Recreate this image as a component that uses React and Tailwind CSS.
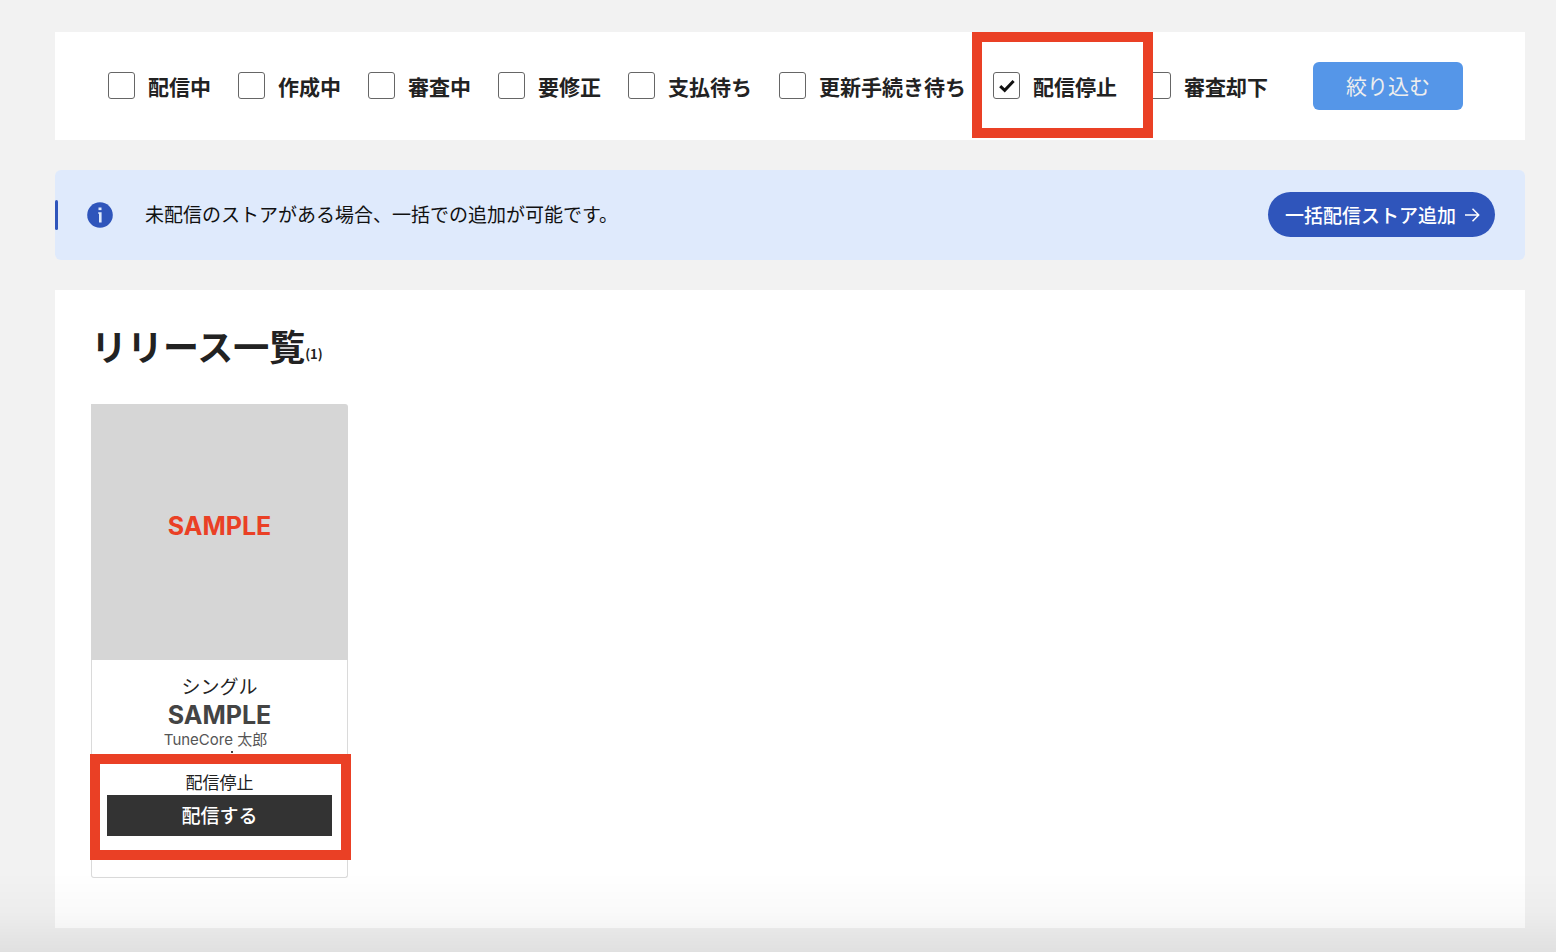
import React from 'react';

const filters = [
    { id: 'live', label: '配信中' },
    { id: 'draft', label: '作成中' },
    { id: 'review', label: '審査中' },
    { id: 'fix', label: '要修正' },
    { id: 'payment', label: '支払待ち' },
    { id: 'renewal', label: '更新手続き待ち' },
    { id: 'stopped', label: '配信停止', checked: true, highlighted: true },
    { id: 'rejected', label: '審査却下' },
];

const releases = [
    { id: 1, type: 'シングル', title: 'SAMPLE', artist: 'TuneCore 太郎', status: '配信停止' },
];

function FilterCheckbox({ id, label, checked, highlighted }) {
    return (
        <div className={`relative mb-px flex shrink-0 items-center gap-[13px] ${highlighted ? 'z-10' : ''}`}>
            {highlighted && (
                <span className="pointer-events-none absolute -top-10 -right-9 -bottom-[39px] -left-[21px] border-10 border-[#ea4025]" />
            )}
            <span className="grid size-[27px] place-items-center">
                <input
                    id={id}
                    type="checkbox"
                    defaultChecked={checked}
                    className="peer col-start-1 row-start-1 size-[27px] appearance-none rounded-[3px] border border-[#666] bg-white"
                />
                <svg viewBox="0 0 16 14" className="pointer-events-none invisible relative col-start-1 row-start-1 h-3.5 w-4 peer-checked:visible" fill="none" stroke="#111" strokeWidth="3">
                    <path d="M1.2 7.2 5.7 11.4 14.6 2" />
                </svg>
            </span>
            <label htmlFor={id} className="pt-0.5 text-[21px] leading-[25px] font-bold whitespace-nowrap">
                {label}
            </label>
        </div>
    );
}

function StoreNotice() {
    return (
        <section className="flex h-[90px] items-center rounded-md bg-[#dfeafc] pr-[30px]">
            <span className="h-[30px] w-[3px] rounded-xs bg-[#2f55bb]" />
            <svg viewBox="0 0 26 26" className="ml-[29px] size-[26px] shrink-0">
                <circle cx="13" cy="13" r="12.8" fill="#2f55bb" />
                <rect x="11.5" y="5.5" width="3" height="2.6" fill="#dfeafc" />
                <path d="M11.2 10.2h3.4v10.3h-2.6v-8.8h-.8z" fill="#dfeafc" />
            </svg>
            <p className="ml-8 flex-1 pb-0.5 text-[19px] leading-7 text-[#111]">
                未配信のストアがある場合、一括での追加が可能です。
            </p>
            <button type="button" className="mb-px flex h-[45px] items-center gap-2 rounded-full bg-[#2f55bb] pr-[15px] pl-[17px] text-[19px] leading-7 font-medium text-white">
                一括配信ストア追加
                <svg viewBox="0 0 16 16" className="size-4" fill="none" stroke="currentColor" strokeWidth="1.5">
                    <path d="M1 8h13.5M8.5 1.8 14.7 8l-6.2 6.2" />
                </svg>
            </button>
        </section>
    );
}

function ReleaseCard({ release }) {
    return (
        <article className="w-[257px] text-center">
            <div className="flex h-64 items-center justify-center rounded-tr-[3px] bg-[#d6d6d6] pb-3">
                <span className="font-[Inter,'Liberation_Sans',sans-serif] text-[25px] leading-7 font-bold text-[#ea4025]">
                    {release.title}
                </span>
            </div>
            <div className="rounded-b-[3px] border-x border-b border-[#dadada] pt-3 pb-[41px]">
                <p className="text-[19px] leading-7 text-[#222]">{release.type}</p>
                <h3 className="font-[Inter,'Liberation_Sans',sans-serif] text-[25px] leading-[30px] font-bold text-[#444]">
                    {release.title}
                </h3>
                <p className="pr-2 font-[Inter,'Noto_Sans_CJK_JP',sans-serif] text-[15px] leading-5 text-[#555]">{release.artist}</p>
                <div className="flex h-5 justify-center pt-px pl-6">
                    <span className="size-0.5 bg-[#444]" />
                </div>
                <div className="relative mx-[15px]">
                    <span className="pointer-events-none absolute -top-4 -right-[19px] -bottom-6 -left-[17px] border-10 border-[#ea4025]" />
                    <p className="pb-px text-[17px] leading-6 text-[#222]">{release.status}</p>
                    <button type="button" className="block h-[41px] w-full bg-[#333] pb-0.5 text-[19px] leading-7 font-medium text-white">
                        配信する
                    </button>
                </div>
            </div>
        </article>
    );
}

export default function App() {
    return (
        <div className="min-h-screen bg-[#f2f2f2] pt-8 pr-[31px] pb-6 pl-[55px] font-['Noto_Sans_CJK_JP',sans-serif] text-[#222]">
            <main className="flex flex-col gap-[30px]">
                <form className="flex items-center gap-[27px] bg-white py-[30px] pl-[53px]">
                    {filters.map((filter) => (
                        <FilterCheckbox key={filter.id} {...filter} />
                    ))}
                    <button type="button" className="ml-[18px] h-12 w-[150px] shrink-0 rounded-md bg-[#5596e8] pb-0.5 text-[21px] leading-7 text-[#eee]">
                        絞り込む
                    </button>
                </form>

                <StoreNotice />

                <section className="bg-white px-9 pt-7 pb-[50px]">
                    <h2 className="mb-8 text-4xl leading-[54px] font-bold">
                        リリース一覧<span className="align-[2px] text-[13px] leading-4">(1)</span>
                    </h2>
                    <div className="flex flex-wrap gap-6">
                        {releases.map((release) => (
                            <ReleaseCard key={release.id} release={release} />
                        ))}
                    </div>
                </section>
            </main>

            {/* Bottom fade */}
            <div className="pointer-events-none fixed inset-x-0 bottom-0 h-20 bg-linear-to-b from-black/0 via-black/2 to-black/7" />
        </div>
    );
}
